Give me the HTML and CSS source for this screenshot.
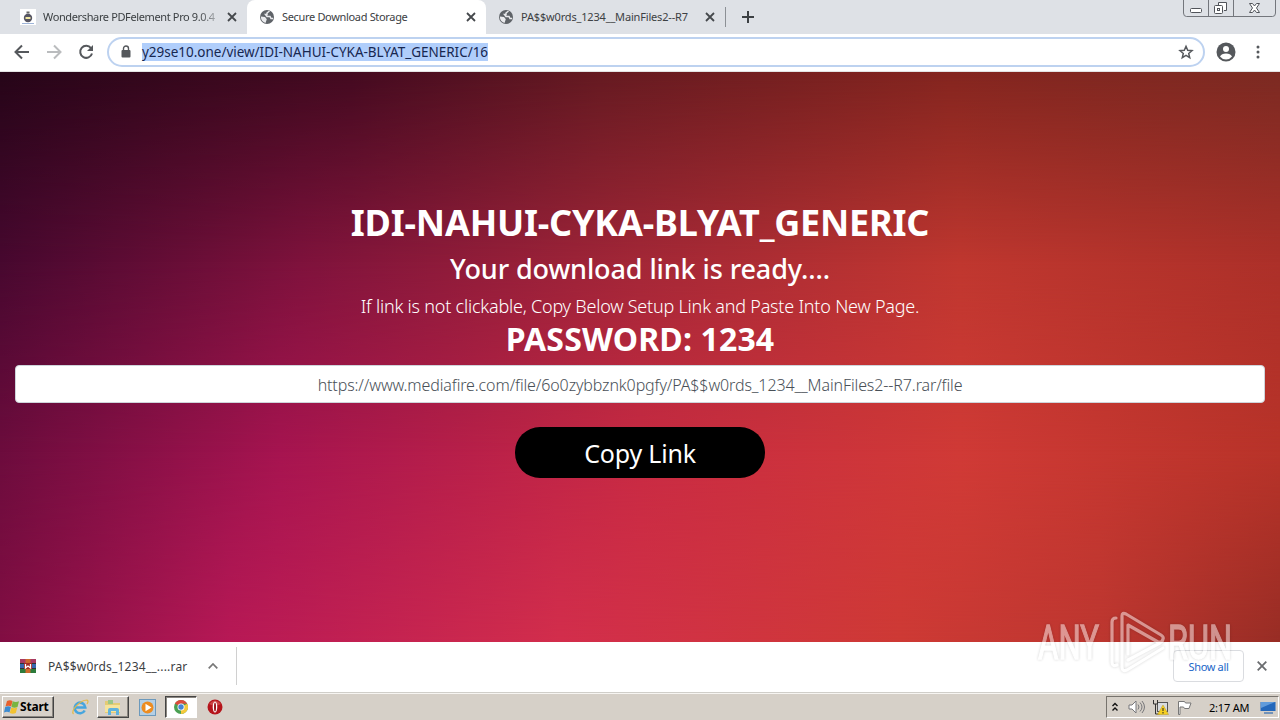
FILE: index.html
```html
<!DOCTYPE html>
<html lang="en">
<head>
    <meta charset="UTF-8">
    <title>Secure Download Storage</title>
    <link rel="stylesheet" href="styles.css">
</head>
<body>
<svg width="0" height="0" class="defs">
    <symbol id="globe" viewBox="0 0 16 16">
        <circle cx="8" cy="8" r="7" fill="#5f6368"/>
        <path d="M1.800 7.500L6 8l1.800 2.200L6.500 14q-4.500-1.500-4.700-6.500z" fill="#e9eaed"/>
        <path d="M10.500 2L8 4v1.500H6.500L8 7.500h3l1 2h2" fill="none" stroke="#e9eaed" stroke-width="1.500"/>
    </symbol>
    <symbol id="close" viewBox="0 0 10 10">
        <path d="M1 1l8 8M9 1L1 9" stroke="#45484c" stroke-width="1.8"/>
    </symbol>
</svg>

<header class="tabs">
    <div class="tab first">
        <svg class="fav" width="16" height="16" viewBox="0 0 16 16"><rect width="16" height="16" fill="#fff"/><circle cx="8" cy="9" r="4.200" fill="#565563"/><rect x="6.500" y="2.500" width="3" height="2" fill="#666"/><path d="M5.500 8h5v2h-5z" fill="#f1e8a3"/><path d="M2 14.500h12" stroke="#9eb4d8"/></svg>
        <span class="label t1">Wondershare PDFelement Pro 9.0.4</span>
        <svg class="x" width="10" height="10"><use href="#close"/></svg>
    </div>
    <div class="tab active">
        <svg class="fav" width="16" height="16"><use href="#globe"/></svg>
        <span class="label t2">Secure Download Storage</span>
        <svg class="x" width="10" height="10"><use href="#close"/></svg>
    </div>
    <div class="tab last">
        <svg class="fav" width="16" height="16"><use href="#globe"/></svg>
        <span class="label t3">PA$$w0rds_1234__MainFiles2--R7</span>
        <svg class="x" width="10" height="10"><use href="#close"/></svg>
    </div>
    <svg class="plus" width="12" height="12" viewBox="0 0 12 12"><path d="M6 0v12M0 6h12" stroke="#3c4043" stroke-width="2"/></svg>
    <svg class="winbtns" width="94" height="17" viewBox="0 0 94 17" fill="none" stroke="#73767c">
        <path d="M.5 0v13q0 3.500 3 3.500h86q3 0 3-3.500V0M25.500 0v16M50.500 0v16"/>
        <g stroke="#51545a">
            <rect x="7.500" y="8.500" width="11" height="4" rx="1" fill="#fff"/>
            <path d="M35.500 5V2.500h8v8H41" fill="#fff"/>
            <rect x="31.500" y="5.500" width="8" height="8" rx="1" fill="#fff"/><rect x="34.500" y="8.500" width="2" height="2"/>
            <path d="M66.500 3.500h3l2 2.500 2-2.500h3l-3 4.500 3 4.500h-3l-2-2.500-2 2.500h-3l3-4.500z" fill="#fff"/>
        </g>
    </svg>
</header>

<nav class="toolbar">
    <svg class="back" width="16" height="16" viewBox="0 0 16 16" fill="none" stroke="#55585c" stroke-width="2"><path d="M15 8H2M8 1.500L1.500 8 8 14.500"/></svg>
    <svg class="fwd" width="16" height="16" viewBox="0 0 16 16" fill="none" stroke="#babcbe" stroke-width="2"><path d="M1 8h13M8 1.500L14.500 8 8 14.500"/></svg>
    <svg class="reload" width="16" height="16" viewBox="0 0 16 16"><path d="M13 4.200A6 6 0 1 0 14 9.500" fill="none" stroke="#55585c" stroke-width="2"/><path d="M15 1v6H9z" fill="#55585c"/></svg>
    <div class="omnibox">
        <svg class="lock" width="10" height="13" viewBox="0 0 10 13"><rect x=".5" y="5" width="9" height="7.500" rx="1" fill="#55585c"/><path d="M2.500 5.500V3.500a2.500 2.500 0 0 1 5 0v2" fill="none" stroke="#55585c" stroke-width="1.400"/></svg>
        <span class="url">y29se10.one/view/IDI-NAHUI-CYKA-BLYAT_GENERIC/16</span>
        <svg class="star" width="16" height="16" viewBox="0 0 16 16"><path d="M8 2.300l1.700 4 4.300.4-3.300 2.800 1 4.200L8 11.400l-3.700 2.300 1-4.200L2 6.700l4.300-.4z" fill="none" stroke="#55585c" stroke-width="1.500"/></svg>
    </div>
    <svg class="user" width="20" height="20" viewBox="0 0 20 20"><circle cx="10" cy="10" r="9.500" fill="#55585c"/><circle cx="10" cy="7" r="3" fill="#fff"/><path d="M4 14.500q1.500-3 6-3t6 3q-2.300 3-6 3t-6-3z" fill="#fff"/></svg>
    <svg class="menu" width="4" height="14" viewBox="0 0 4 14" fill="#55585c"><circle cx="2" cy="2" r="1.500"/><circle cx="2" cy="7" r="1.500"/><circle cx="2" cy="12" r="1.500"/></svg>
</nav>

<main class="page">
    <div class="bg row4"></div>
    <div class="bg row3"></div>
    <div class="bg row2"></div>
    <div class="bg row1"></div>
    <div class="content">
        <h1>IDI-NAHUI-CYKA-BLYAT_GENERIC</h1>
        <h3>Your download link is ready....</h3>
        <p class="hint">If link is not clickable, Copy Below Setup Link and Paste Into New Page.</p>
        <h2>PASSWORD: 1234</h2>
        <div class="field"><span>https://www.mediafire.com/file/6o0zybbznk0pgfy/PA$$w0rds_1234__MainFiles2--R7.rar/file</span></div>
        <button class="copy">Copy Link</button>
    </div>
</main>

<div class="downloads">
    <svg class="rar" width="16" height="16" viewBox="0 0 16 16"><path d="M0 1h16v5H0z" fill="#a83a62"/><path d="M0 6h16v5H0z" fill="#3868b0"/><path d="M0 11h16v4H0z" fill="#2d7b3b"/><path d="M0 5.500h16M0 10.500h16" stroke="#333"/><path d="M5.500 1h5v14h-5z" fill="#cf6a2c"/><path d="M4 5h8v6H4z" fill="#a52b24"/><path d="M5.500 6v4l2.500-2 2.500 2V6" fill="none" stroke="#fff" stroke-width="1.300"/></svg>
    <span class="fname">PA$$w0rds_1234__....rar</span>
    <svg class="chev" width="10" height="6" viewBox="0 0 10 6"><path d="M.7 5.300L5 1l4.300 4.300" fill="none" stroke="#777" stroke-width="1.700"/></svg>
    <i class="sep"></i>
    <button class="showall">Show all</button>
    <svg class="dx" width="10" height="10" viewBox="0 0 10 10"><path d="M.7.7l8.600 8.600M9.300.7L.7 9.300" stroke="#6a6c6f" stroke-width="1.800"/></svg>
</div>

<footer class="taskbar">
    <div class="start">
        <svg width="16" height="16" viewBox="0 0 16 16"><path d="M3 2q3-1.500 5.500 0L7.200 7.500Q4.500 6 1.500 7.500z" fill="#e7602c"/><path d="M8.700 2.300q3 1.500 6.300 0L13.500 8q-3 1.300-6 0z" fill="#79b540"/><path d="M1.200 8q3-1.500 5.700 0l-1.400 5.500q-2.500-1.500-5.500 0z" fill="#3c8bd0"/><path d="M7.300 8.500q3 1.500 6 0l-1.500 5.500q-3 1.300-6 0z" fill="#f2c230"/></svg>
        <b>Start</b>
    </div>
    <svg class="ie" width="18" height="18" viewBox="0 0 18 18" fill="none"><path d="M13.700 12.500A5.300 5.300 0 1 1 14.300 9.500H5" stroke="#46a5de" stroke-width="2.600"/><path d="M2.500 16C-1 13 9 2 16 2q2 1 0 4" stroke="#e3b946" stroke-width="1.200"/></svg>
    <div class="task"><svg width="18" height="18" viewBox="0 0 18 18"><path d="M1 3h6l1 2h8v10H1z" fill="#e3cb74"/><path d="M4 2h5v4H4z" fill="#9bc787"/><path d="M1 7h15v7H1z" fill="#f5e49c"/><path d="M4 17v-5q0-2 2-2h7q2 0 2 2v5h-3v-4H7v4z" fill="#5fb2dd"/></svg></div>
    <svg class="wmp" width="17" height="17" viewBox="0 0 17 17"><rect x=".5" y=".5" width="16" height="16" fill="#b4cfe5" stroke="#6c99bc"/><circle cx="8.500" cy="8.500" r="6" fill="#ed8c20"/><path d="M6.500 4.800l6 3.700-6 3.700z" fill="#fff"/></svg>
    <div class="task on"><svg width="16" height="16" viewBox="0 0 16 16"><circle cx="8" cy="8" r="7" fill="#4aa052"/><path d="M8 8L1.900 4.500A7 7 0 0 1 14.200 4.700H8z" fill="#dc4b3c"/><path d="M8 8l6.200-3.300A7 7 0 0 1 8 15z" fill="#f5c93b"/><circle cx="8" cy="8" r="3.500" fill="#fff"/><circle cx="8" cy="8" r="2.700" fill="#4485d4"/></svg></div>
    <svg class="opera" width="16" height="16" viewBox="0 0 16 16"><circle cx="8" cy="8" r="7.500" fill="#b5141b"/><path d="M2 5q6-7 12 0-6 3-12 0" fill="#cc4444"/><ellipse cx="8" cy="8" rx="2.300" ry="5.500" fill="#fff"/><ellipse cx="8" cy="8" rx="1" ry="4.500" fill="#99151a"/></svg>
    <div class="tray">
        <svg width="8" height="10" viewBox="0 0 8 10"><path d="M1.500 4L4 1.500 6.500 4M1.500 8.500L4 6l2.500 2.500" fill="none" stroke="#111" stroke-width="1.400"/></svg>
        <svg class="vol" width="17" height="14" viewBox="0 0 17 14" fill="none" stroke="#77777a"><path d="M1 5h3l4-4v12L4 9H1z" fill="#fff"/><path d="M10 4.500q2 2.500 0 5M12 2.500q4 4.500 0 9M14 1q5 6 0 12"/></svg>
        <svg class="net" width="17" height="15" viewBox="0 0 17 15"><rect x="5.500" y="2.500" width="10" height="9" fill="#d9dce0" stroke="#555"/><path d="M1.500 0v4h4V0M3.500 4v10h4" fill="none" stroke="#333"/><path d="M11 5l5.500 9.500h-11z" fill="#f6cf20" stroke="#b99b20" stroke-width=".5"/><path d="M11 8v3M11 12v1.500" stroke="#222"/></svg>
        <svg class="flag" width="17" height="15" viewBox="0 0 17 15"><path d="M2.500 14.500V1.500h6l1 1.500h5.500L13 8.500H8.500L7.500 7H4v7.500z" fill="#fff" stroke="#777"/></svg>
        <span class="time">2:17 AM</span>
        <svg class="desk" width="16" height="13" viewBox="0 0 16 13"><path d="M.5 1h15v9H.5z" fill="#2468bb"/><path d="M1 1h14L1 7z" fill="#609bdb"/><path d="M4 12h9" stroke="#517fb5" stroke-width="1.500"/></svg>
    </div>
</footer>

<!-- logo over the page and the download bar -->
<svg class="mark" width="210" height="70" viewBox="0 0 210 70">
    <g fill="#fff" stroke="#fff" stroke-width="1.300" font-family="Roboto" font-size="48">
        <text x="8" y="53" textLength="61" lengthAdjust="spacingAndGlyphs">ANY</text>
        <text x="138" y="53" textLength="64" lengthAdjust="spacingAndGlyphs">RUN</text>
    </g>
    <path d="M86 12q-4 0-4 4v40q0 5 5 3M98 48V19l30 17q4 1 5-3 1-2-2-4L96 8q-4-2-4 2v51q0 5 5 3l36-22M98 54l32-17" fill="none" stroke="#fff" stroke-width="3.200" stroke-linejoin="round" stroke-linecap="round"/>
</svg>
</body>
</html>
```
FILE: styles.css
```css
body,h1,h2,h3,p {
    margin: 0; padding: 0;
}
body {
    width: 1280px;height: 720px;overflow: hidden;position: relative;
    display: flex;flex-direction: column;
    font-family: "Noto Sans", sans-serif;
}
* {
    box-sizing: border-box;
}
svg {
    display: block;flex: none;
}
.defs {
    position: absolute;
}
.tabs {
    height: 34px;background: #dee1e6;display: flex;flex: none;
}
.tab {
    height: 34px;display: flex;align-items: center;font-size: 11px;color: #3c4043;
}
.first {
    width: 247px;padding-left: 20px;
}
.active {
    width: 239px;padding-left: 12px;background: #fff;border-radius: 8px 8px 0 0;
}
.last {
    width: 240px;padding-left: 12px;
}
.last::after {
    content: "";width: 1px;height: 20px;background: #8c9095;margin-left: 10px;
}
.label {
    margin-left: 7px;width: 178px;white-space: nowrap;line-height: 16px;padding-bottom: 1px;
}
.t1 {
    letter-spacing: -.37px;
    -webkit-mask-image: linear-gradient(90deg, #000 155px, transparent 182px);
}
.t2 {
    letter-spacing: -.33px;
}
.t3 {
    letter-spacing: -.17px;
}
.x {
    margin-left: 6px;
}
.plus {
    margin: 11px 0 0 16px;
}
.winbtns {
    margin-left: auto;margin-right: 3px;
}
.toolbar {
    height: 38px;flex: none;background: #fff;display: flex;align-items: center;padding: 0 19px 2px 14px;border-bottom: 1px solid #e3e3e3;
}
.fwd,.reload {
    margin-left: 16px;
}
.omnibox {
    margin-left: 13px;width: 1098px;height: 30px;border: 2px solid #bdd2f0;border-radius: 15px;
    display: flex;align-items: center;padding: 0 9px 0 12px;
}
.url {
    margin-left: 11px;font-size: 13.500px;letter-spacing: -.02px;line-height: 18px;background: #b0cefb;color: #172750;white-space: nowrap;
}
.star {
    margin-left: auto;
}
.user {
    margin-left: 11px;
}
.menu {
    margin-left: 20px;
}

.page {
    height: 570px;flex: none;position: relative;color: #fff;
}
/* each row is a horizontal band that fades into the one below it */
.bg {
    position: absolute;top: 0;left: 0;width: 1280px;height: 570px;
}
.row4 {
    background: linear-gradient(90deg, #820e43 0, #b81956 230px, #d32e4c 560px, #ce3a35 900px, #bd3730 1100px, #982d25 1280px);
}
.row3 {
    background: linear-gradient(90deg, #6c0c3d 0, #a61450 280px, #c82a43 640px, #d03a36 960px, #b83329 1280px);
    -webkit-mask-image: linear-gradient(#000 380px, transparent 570px);
}
.row2 {
    background: linear-gradient(90deg, #47082f 0, #7e123c 300px, #a32737 640px, #bf372f 960px, #ac3029 1280px);
    -webkit-mask-image: linear-gradient(#000 190px, transparent 380px);
}
.row1 {
    background: linear-gradient(90deg, #260518 0, #430a20 350px, #651a21 600px, #84251f 950px, #7b2a22 1280px);
    -webkit-mask-image: linear-gradient(#000 0, transparent 190px);
}
.content {
    position: relative;padding: 128px 15px 0;display: flex;flex-direction: column;align-items: center;text-align: center;white-space: nowrap;
}
h1 {
    font-size: 36px;line-height: 46px;font-weight: 700;letter-spacing: -.2px;
}
h3 {
    font-size: 27px;line-height: 34px;font-weight: 500;letter-spacing: -.1px;margin-top: 6px;
}
.hint {
    font-size: 18px;line-height: 24px;font-weight: 300;letter-spacing: -.21px;margin-top: 8px;
}
h2 {
    font-size: 32px;line-height: 38px;font-weight: 700;letter-spacing: .15px;margin-top: 2px;
}
.field {
    width: 1250px;height: 38px;line-height: 39px;margin-top: 7px;background: #fff;border: 1px solid #ced4da;border-radius: 4px;
    font-size: 16px;font-weight: 300;letter-spacing: -.115px;color: #495057;
}
.copy {
    width: 250px;height: 51px;margin-top: 24px;padding: 0;border: 0;border-radius: 25px;background: #000;color: #fff;
    font: 25px "Noto Sans", sans-serif;letter-spacing: -.2px;
}

.downloads {
    height: 51px;flex: none;background: #fff;display: flex;align-items: center;padding: 0 13px 2px 20px;border-bottom: 1px solid #d0cec9;
}
.fname {
    margin-left: 12px;width: 150px;font-size: 12px;letter-spacing: .2px;color: #3c4043;
}
.chev {
    margin-left: 10px;
}
.sep {
    width: 1px;height: 38px;margin-left: 18px;background: #d0d0d0;
}
.showall {
    width: 71px;height: 32px;margin-left: auto;background: #fff;border: 1px solid #dadce0;border-radius: 4px;padding: 0;
    font: 11px "Noto Sans", sans-serif;letter-spacing: -.35px;color: #1a66c8;
}
.dx {
    margin-left: 13px;
}
.taskbar {
    height: 27px;flex: none;background: #d6d0c8;border-top: 1px solid #f7f5f2;display: flex;align-items: center;padding-left: 2px;
}
.start,.task {
    display: flex;align-items: center;height: 22px;border: 1px solid;border-color: #fff #444 #444 #fff;box-shadow: inset -1px -1px #8a8680;
}
.start {
    width: 52px;font-size: 12px;letter-spacing: -.2px;padding-left: 1px;
}
.start b {
    color: #000;padding-bottom: 1px;
}
.ie {
    margin-left: 17px;
}
.task {
    width: 32px;margin-left: 8px;justify-content: center;
}
.on {
    background: #fff;border-color: #444 #fff #fff #444;box-shadow: inset 1px 1px #8a8680;
}
.wmp {
    margin-left: 10px;
}
.wmp + .task {
    margin-left: 9px;
}
.opera {
    margin-left: 10px;
}
.tray {
    width: 173px;height: 22px;margin-left: auto;margin-right: 1px;border: 1px solid;border-color: #77736d #fff #fff #77736d;
    display: flex;align-items: center;padding-left: 4px;
}
.vol {
    margin-left: 9px;
}
.net {
    margin-left: 7px;
}
.flag {
    margin-left: 7px;
}
.time {
    margin-left: 16px;width: 42px;font-size: 11px;letter-spacing: -.2px;white-space: nowrap;color: #000;
}
.desk {
    margin-left: 9px;
}
.mark {
    position: absolute;left: 1030px;top: 606px;opacity: .48;filter: drop-shadow(0 0 1.500px rgba(0,0,0,.35));
}
```
